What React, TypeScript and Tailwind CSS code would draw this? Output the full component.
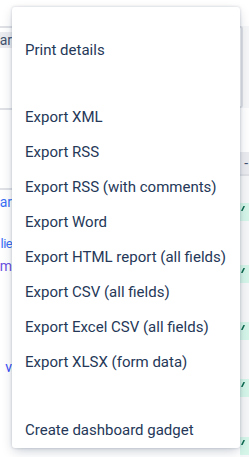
const groups: string[][] = [
  ["Print details"],
  [
    "Export XML",
    "Export RSS",
    "Export RSS (with comments)",
    "Export Word",
    "Export HTML report (all fields)",
    "Export CSV (all fields)",
    "Export Excel CSV (all fields)",
    "Export XLSX (form data)",
  ],
  ["Create dashboard gadget"],
];

function Pill() {
  return (
    <div className="flex h-[18px] items-start bg-[#d5f6e9] pl-[1px] pt-[3px]">
      <svg width="4" height="5" viewBox="0 0 4 5">
        <path d="M1 4.5 L3 0.5" stroke="#0b6b4f" strokeWidth="1.6" strokeLinecap="round" />
      </svg>
    </div>
  );
}

function LeftColumn() {
  return (
    <div className="flex w-[12px] flex-col text-[14px]">
      <div className="h-[26px]" />
      <div className="h-[2px] bg-[#dfe1e6]" />
      <div className="h-[4px]" />
      <div className="flex h-[16px] items-center justify-end bg-[#ebecf0] text-[#42526e]">
        <span className="leading-none">ar</span>
      </div>
      <div className="h-[60px]" />
      <div className="h-[2px] bg-[#dfe1e6]" />
      <div className="h-[78px]" />
      <div className="h-[2px] bg-[#dfe1e6]" />
      <div className="flex h-[22px] items-center justify-end pt-[3px] text-[#3b6ff5]">
        <span>ar</span>
      </div>
      <div className="h-[20px]" />
      <div className="flex flex-col items-end leading-[23px]">
        <span className="text-[13px] tracking-[-0.6px] text-[#3b6ff5]">lie</span>
        <span className="text-[#6b4fe0]">m</span>
      </div>
      <div className="h-[79px]" />
      <div className="flex h-[20px] items-center justify-end text-[#3b4ff5]">
        <span>v</span>
      </div>
    </div>
  );
}

function RightColumn() {
  return (
    <div className="flex w-[9px] flex-col bg-[#f6f7f8] text-[14px]">
      <div className="h-[26px] bg-white" />
      <div className="mr-[6px] h-[82px] rounded-r-[3px] border-2 border-l-0 border-[#dfe1e6] bg-white" />
      <div className="h-[44px] bg-white" />
      <div className="flex h-[22px] items-center justify-end bg-[#ebecf0] pr-[1px] text-[#42526e]">
        <span className="leading-none">-</span>
      </div>
      <div className="h-[2px] bg-[#dfe1e6]" />
      <div className="h-[27px]" />
      <Pill />
      <div className="h-[44px]" />
      <Pill />
      <div className="h-[39px]" />
      <Pill />
      <div className="h-[39px]" />
      <Pill />
      <div className="h-[40px]" />
      <Pill />
    </div>
  );
}

export default function App() {
  return (
    <div
      className="relative flex h-[457px] w-[249px] justify-between overflow-hidden bg-white"
      style={{ fontFamily: 'Roboto, "Segoe UI", sans-serif' }}
    >
      <LeftColumn />
      <RightColumn />

      <div className="absolute left-[12px] top-[7px] w-[228px] rounded-[3px] bg-white pt-[26px] shadow-[0_4px_12px_-2px_rgba(9,30,66,0.25),0_0_3px_rgba(9,30,66,0.2)]">
        {groups.map((group, i) => (
          <div key={i} className={i === 1 ? "mt-[32px]" : i === 2 ? "mt-[33px]" : ""}>
            {group.map((label) => (
              <div
                key={label}
                className="flex h-[35px] items-center whitespace-nowrap px-[13px] text-[15px] text-[#253858]"
              >
                {label}
              </div>
            ))}
          </div>
        ))}
      </div>
    </div>
  );
}
